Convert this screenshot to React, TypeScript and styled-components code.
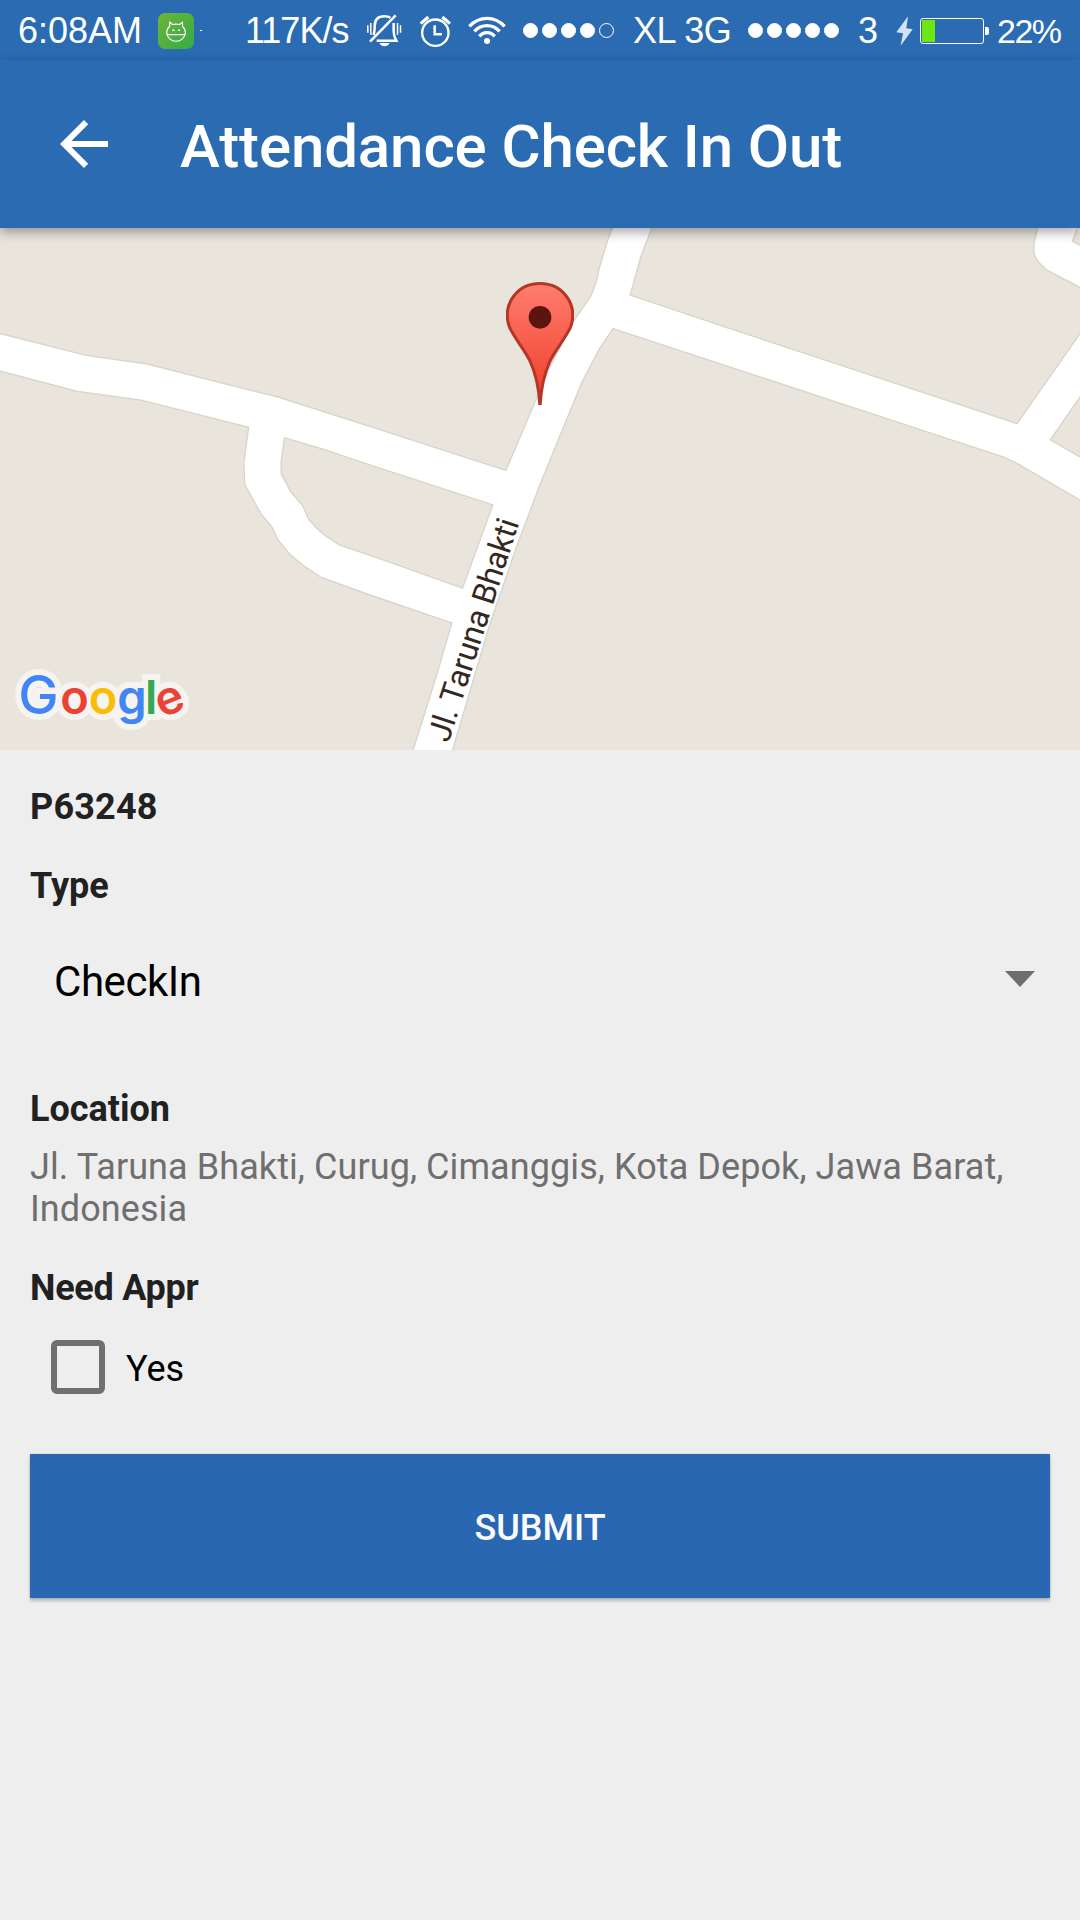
import React, { useState } from "react";
import styled, { createGlobalStyle } from "styled-components";

const GlobalStyle = createGlobalStyle`
  html, body { margin: 0; padding: 0; background: #eeeeee; }
  * { box-sizing: border-box; }
`;

const Screen = styled.div`
  width: 1080px;
  height: 1920px;
  display: flex;
  flex-direction: column;
  background: #eeeeee;
  font-family: Roboto, "Noto Sans", sans-serif;
  overflow: hidden;
`;

const StatusBar = styled.header`
  height: 60px;
  flex: none;
  display: flex;
  align-items: center;
  padding: 1px 0 0 18px;
  background: #2a6bb2;
  color: #fff;
  font-family: "Liberation Sans", Arial, sans-serif;
  white-space: nowrap;
`;

const StatusText = styled.span<{ $w: number; $gap?: number; $size?: number; $track?: number }>`
  flex: none;
  width: ${(p) => p.$w}px;
  margin-left: ${(p) => p.$gap ?? 0}px;
  font-size: ${(p) => p.$size ?? 36}px;
  letter-spacing: ${(p) => p.$track ?? 0}px;
  line-height: 40px;
`;

const StatusIcon = styled.svg<{ $gap: number }>`
  flex: none;
  display: block;
  margin-left: ${(p) => p.$gap}px;
`;

const NotificationDot = styled.i`
  width: 2px;
  height: 1px;
  margin-left: 6px;
  background: #fff;
`;

const SignalRow = styled.div<{ $gap: number }>`
  display: flex;
  flex: none;
  gap: 4px;
  margin-left: ${(p) => p.$gap}px;
`;

const SignalDot = styled.i<{ $on: boolean }>`
  width: 15px;
  height: 15px;
  border-radius: 50%;
  border: 1px solid #fff;
  background: ${(p) => (p.$on ? "#fff" : "transparent")};
`;

const Battery = styled.div`
  flex: none;
  display: flex;
  width: 64px;
  height: 26px;
  margin-left: 7px;
  padding: 1px;
  border: 1px solid #fff;
  border-radius: 3px;
`;

const BatteryLevel = styled.i`
  width: 13px;
  background: #6be813;
`;

const BatteryTip = styled.i`
  width: 4px;
  height: 8px;
  margin-left: 1px;
  background: #fff;
  border-radius: 0 2px 2px 0;
`;

const AppBar = styled.nav`
  position: relative;
  z-index: 1;
  height: 168px;
  flex: none;
  display: flex;
  align-items: center;
  padding-left: 48px;
  background: #2a6bb2;
  box-shadow: 0 4px 11px rgba(0, 0, 0, 0.36);
`;

const BackButton = styled.button`
  width: 72px;
  height: 72px;
  padding: 0;
  border: 0;
  background: none;
`;

const Title = styled.h1`
  margin: 5px 0 0 60px;
  color: #fff;
  font-size: 60px;
  font-weight: 500;
  letter-spacing: -0.12px;
  line-height: 72px;
  white-space: nowrap;
`;

const MapArea = styled.section`
  position: relative;
  height: 522px;
  flex: none;
  overflow: hidden;
  background: #fff;
`;

const Streets = styled.svg`
  display: block;
  width: 1080px;
  height: 522px;
`;

const Pin = styled.svg`
  position: absolute;
  left: 506px;
  top: 54px;
`;

const Attribution = styled.svg`
  position: absolute;
  left: 0;
  top: 422px;
`;

const Form = styled.main`
  display: flex;
  flex-direction: column;
  padding: 36px 30px 0;
`;

const Label = styled.div<{ $top?: number; $track?: number }>`
  margin-top: ${(p) => p.$top ?? 37}px;
  color: #212121;
  font-size: 36px;
  font-weight: 700;
  letter-spacing: ${(p) => p.$track ?? 0}px;
  line-height: 42px;
`;

const Spinner = styled.div`
  height: 144px;
  display: flex;
  align-items: center;
  justify-content: space-between;
  padding: 0 15px 0 24px;
  color: #000;
  font-size: 42px;
`;

const SpinnerValue = styled.span`
  padding-top: 6px;
  letter-spacing: -0.45px;
  line-height: 50px;
`;

const Caret = styled.i`
  border: 15px solid transparent;
  border-top: 16px solid #6e6e6e;
  border-bottom: 0;
`;

const Address = styled.p`
  margin: 16px 0 0;
  color: #6f6f6f;
  font-size: 36px;
  letter-spacing: 0.08px;
  line-height: 42px;
`;

const CheckRow = styled.label`
  height: 96px;
  margin-top: 10px;
  display: flex;
  align-items: center;
  gap: 21px;
  padding-left: 21px;
  color: #000;
  font-size: 36px;
  line-height: 42px;
`;

const CheckInput = styled.input`
  appearance: none;
  flex: none;
  width: 54px;
  height: 54px;
  margin: 0;
  border: 6px solid #6f6f6f;
  border-radius: 6px;
  &:checked { background: #2a67b2; }
`;

const CheckText = styled.span`
  padding-top: 3px;
`;

const SubmitButton = styled.button`
  height: 144px;
  margin-top: 39px;
  padding: 3px 0 0;
  border: 0;
  background: #2a67b2;
  color: #fafafa;
  font: 500 36px/42px Roboto, sans-serif;
  box-shadow: 0 3px 3px rgba(0, 0, 0, 0.22), 0 0 2px rgba(0, 0, 0, 0.12);
`;

const BLOCKS = [
  "-9,0 1787,0 1778,23 1765,57 1740,140 1732,178 1716,220 1698,247 1666,292 1647,327 1592,436 1558,518 1469,727 1107,610 805,513 722,493 428,418 250,393 15,333 -9,327",
  "-9,436 222,497 410,523 722,602 708,705 711,768 757,852 790,892 808,930 841,970 880,1003 933,1038 1058,1083 1197,1131 1312,1170 1270,1315 1190,1570 -9,1570",
  "826,632 947,668 1058,706 1431,827 1343,1069 1098,982 985,943 943,915 920,895 897,870 879,830 845,790 817,738 816,705",
  "1902,0 1893,23 1861,105 1847,156 1830,218 2113,313 2425,416 2953,591 3145,317 3145,201 3038,144 3018,125 3006,108 3002,90 3003,65 3013,23 3020,0",
  "3136,0 3128,23 3114,62 3145,77",
  "3145,501 3050,638 3145,693",
  "1780,315 2758,637 2913,688 2948,704 3145,818 3145,1570 1305,1570 1314,1539 1423,1171 1500,949 1568,768 1688,475 1740,375",
];

const Signal = ({ levels, gap }: { levels: boolean[]; gap: number }) => (
  <SignalRow $gap={gap}>
    {levels.map((on, i) => (
      <SignalDot key={i} $on={on} />
    ))}
  </SignalRow>
);

const LOGO = [
  { ch: "G", x: 18.3, color: "#4285f4", size: 54, weight: 500 },
  { ch: "o", x: 60.2, color: "#ea4335", size: 47, weight: 600 },
  { ch: "o", x: 88.7, color: "#fbbc05", size: 47, weight: 600 },
  { ch: "g", x: 117.3, color: "#4285f4", size: 47, weight: 600 },
  { ch: "l", x: 144.9, color: "#34a853", size: 47, weight: 600 },
  { ch: "e", x: 156.2, color: "#ea4335", size: 47, weight: 600 },
];

const LogoLetters = ({ halo }: { halo?: boolean }) => (
  <g
    fontFamily="Inter, sans-serif"
    stroke={halo ? "#f6f4f0" : "none"}
    strokeWidth={halo ? 12 : 0}
  >
    {LOGO.map((l, i) => (
      <text
        key={i}
        x={l.x}
        y={64}
        fontSize={l.size}
        fontWeight={l.weight}
        fill={halo ? "#f6f4f0" : l.color}
        transform={l.ch === "e" ? "rotate(-22 170 52)" : undefined}
      >
        {l.ch}
      </text>
    ))}
  </g>
);

export default function App() {
  const [needAppr, setNeedAppr] = useState(false);
  return (
    <Screen>
      <GlobalStyle />
      <StatusBar>
        <StatusText $w={123}>6:08AM</StatusText>
        <StatusIcon $gap={17} width="36" height="36" viewBox="0 0 36 36">
          <defs>
            <linearGradient id="appIcon" x1="0" y1="0" x2="1" y2="1">
              <stop offset="0" stopColor="#6fb33a" />
              <stop offset="1" stopColor="#33ad45" />
            </linearGradient>
          </defs>
          <rect width="36" height="36" rx="7" fill="url(#appIcon)" />
          <path
            d="M11.500 13.500L11.800 9.300L14.500 11.500Q18 10.600 21.500 11.500L24.400 9.300L24.600 13.500Q27.400 16 27.400 20A9.400 9.200 0 0 1 8.700 20Q8.700 16 11.500 13.500ZM8.700 21.600H27.400"
            fill="none"
            stroke="#fff"
            strokeWidth="1.200"
          />
          <path d="M14.500 17.200h2M20 17.200h2" stroke="#fff" strokeWidth="1.500" />
        </StatusIcon>
        <NotificationDot />
        <StatusText $w={106} $gap={43} $track={-1}>117K/s</StatusText>
        <StatusIcon $gap={15} width="36" height="33" viewBox="48 39 108 99">
          <g fill="none" stroke="#fff" strokeWidth="7.500">
            <path d="M60 122L137 43" />
            <path d="M70 102Q74 94 74 76C74 54 86 46 103 46Q115 46 121 50" />
            <path d="M131 66V92Q131 104 139 119H80" />
            <path d="M53.500 73V95M62.500 66V101M142.500 66V101M151.500 73V95" strokeWidth="4.500" />
          </g>
          <path d="M88 126H119Q113 136 103.500 136T88 126Z" fill="#fff" />
        </StatusIcon>
        <StatusIcon $gap={17} width="32" height="32" viewBox="206 41 96 96">
          <g fill="none" stroke="#fff" strokeWidth="7">
            <circle cx="255" cy="94" r="39.500" />
            <path d="M253 72V99H275" strokeWidth="7.500" />
            <path d="M211 67L234 47M276 47L299 67" strokeWidth="9.500" />
          </g>
        </StatusIcon>
        <StatusIcon $gap={17} width="38" height="29" viewBox="354 45 114 87">
          <circle cx="411" cy="120" r="9" fill="#fff" />
          <g fill="none" stroke="#fff" strokeWidth="10">
            <path d="M358 76Q381 52 411 52T464 76" />
            <path d="M373 91Q389 74 411 74T449 91" />
            <path d="M388 106Q397 95 411 95T434 106" />
          </g>
        </StatusIcon>
        <Signal gap={17} levels={[true, true, true, true, false]} />
        <StatusText $w={102} $gap={19} $track={-0.5}>XL 3G</StatusText>
        <Signal gap={13} levels={[true, true, true, true, true]} />
        <StatusText $w={20} $gap={19}>3</StatusText>
        <StatusIcon $gap={18} width="17" height="30" viewBox="530 45 51 90">
          <path d="M566 46L531 94L551 97L544 134L580 85L561 82Z" fill="#d4e2f0" />
        </StatusIcon>
        <Battery>
          <BatteryLevel />
        </Battery>
        <BatteryTip />
        <StatusText $w={70} $gap={8} $size={34} $track={-1.5}>22%</StatusText>
      </StatusBar>

      <AppBar>
        <BackButton aria-label="Back">
          <svg width="72" height="72" viewBox="0 0 24 24">
            <path
              d="M20 11H7.830l5.590-5.590L12 4l-8 8 8 8 1.410-1.410L7.830 13H20v-2z"
              fill="#fff"
            />
          </svg>
        </BackButton>
        <Title>Attendance Check In Out</Title>
      </AppBar>

      <MapArea>
        <Streets viewBox="0 23 3136 1516" preserveAspectRatio="none">
          {BLOCKS.map((points, i) => (
            <polygon key={i} points={points} fill="#e9e5dc" stroke="#d9d5c9" strokeWidth="4" />
          ))}
          <text
            transform="translate(1302 1520) rotate(-72.2)"
            fontFamily="Roboto, sans-serif"
            fontSize="93"
            textLength="674"
            fill="#33291f"
            stroke="#fff"
            strokeWidth="10"
            paintOrder="stroke"
          >
            Jl. Taruna Bhakti
          </text>
        </Streets>
        <Pin width="68" height="123" viewBox="48 66 204 369">
          <defs>
            <linearGradient id="pinFill" x1="0" y1="0" x2="0" y2="1">
              <stop offset="0" stopColor="#ff7d6e" />
              <stop offset="0.75" stopColor="#f34a37" />
              <stop offset="1" stopColor="#ee3524" />
            </linearGradient>
          </defs>
          <path
            d="M150 445C148 385 138 343 120 303C103 268 77 240 59 203C34 136 80 70.500 150 70.500S266 136 241 203C223 240 197 268 180 303C162 343 152 385 150 445Z"
            fill="url(#pinFill)"
            stroke="#b33627"
            strokeWidth="9"
          />
          <circle cx="150" cy="172" r="34" fill="#5b150f" />
        </Pin>
        <Attribution width="220" height="100">
          <LogoLetters halo />
          <LogoLetters />
        </Attribution>
      </MapArea>

      <Form>
        <Label $top={0} $track={0.2}>P63248</Label>
        <Label>Type</Label>
        <Spinner>
          <SpinnerValue>CheckIn</SpinnerValue>
          <Caret />
        </Spinner>
        <Label>Location</Label>
        <Address>Jl. Taruna Bhakti, Curug, Cimanggis, Kota Depok, Jawa Barat, Indonesia</Address>
        <Label $track={-0.25}>Need Appr</Label>
        <CheckRow>
          <CheckInput
            type="checkbox"
            checked={needAppr}
            onChange={(e) => setNeedAppr(e.target.checked)}
          />
          <CheckText>Yes</CheckText>
        </CheckRow>
        <SubmitButton>SUBMIT</SubmitButton>
      </Form>
    </Screen>
  );
}
